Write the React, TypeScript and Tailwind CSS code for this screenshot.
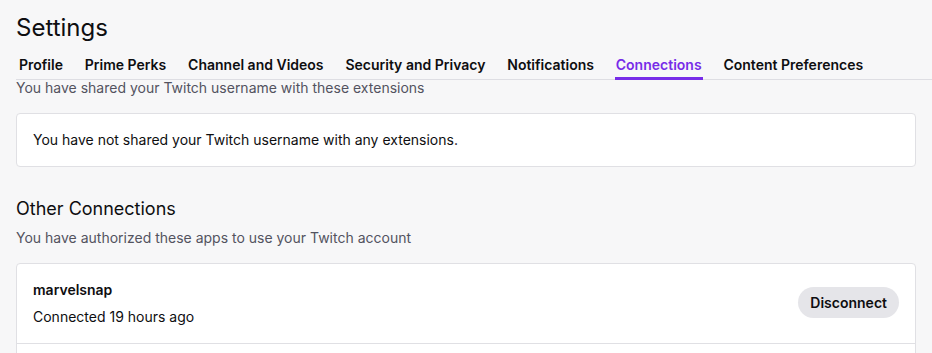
const tabs = [
  "Profile",
  "Prime Perks",
  "Channel and Videos",
  "Security and Privacy",
  "Notifications",
  "Connections",
  "Content Preferences",
];

export default function App() {
  return (
    <div className="h-[353px] w-[932px] overflow-hidden bg-[#f7f7f8] pl-4 pr-4 font-['Inter','Liberation_Sans',sans-serif] text-[#0e0e10]">
      <h1 className="pt-[12px] text-[24px] leading-[32px] font-normal">Settings</h1>

      {/* barre d'onglets */}
      <nav className="mt-[11px] -mr-4 flex gap-[21.85px] border-b border-[#dedee3] pl-[3px]">
        {tabs.map((t) => (
          <div
            key={t}
            className={
              "relative pb-[4px] text-[14px] leading-[20px] font-semibold " +
              (t === "Connections" ? "text-[#772ce8]" : "")
            }
          >
            {t}
            {t === "Connections" && (
              <span className="absolute -left-px -right-px bottom-[-1px] h-[3px] bg-[#772ce8]" />
            )}
          </div>
        ))}
      </nav>

      <p className="mt-[-2px] text-[14px] leading-[20px] text-[#53535f]">
        You have shared your Twitch username with these extensions
      </p>

      <div className="mt-[15px] rounded-[4px] border border-[#e0e0e4] bg-white px-4 py-[16px]">
        <p className="text-[14px] leading-[20px]">
          You have not shared your Twitch username with any extensions.
        </p>
      </div>

      <h2 className="mt-[30px] text-[18px] leading-[24px] font-normal">Other Connections</h2>
      <p className="mt-[7px] text-[14px] leading-[20px] text-[#53535f]">
        You have authorized these apps to use your Twitch account
      </p>

      <div className="mt-[15px] rounded-t-[4px] border border-[#e0e0e4] bg-white">
        <div className="flex items-center justify-between border-b border-[#e0e0e4] px-4 pt-[16px] pb-[16px]">
          <div>
            <div className="text-[14px] leading-[20px] font-semibold">marvelsnap</div>
            <div className="mt-[7px] text-[14px] leading-[20px]">Connected 19 hours ago</div>
          </div>
          <button className="mb-[2px] h-[31px] rounded-full bg-[#e5e5e9] px-[12px] text-[14px] font-semibold text-[#0e0e10]">
            Disconnect
          </button>
        </div>
        <div className="h-[20px]" />
      </div>
    </div>
  );
}
